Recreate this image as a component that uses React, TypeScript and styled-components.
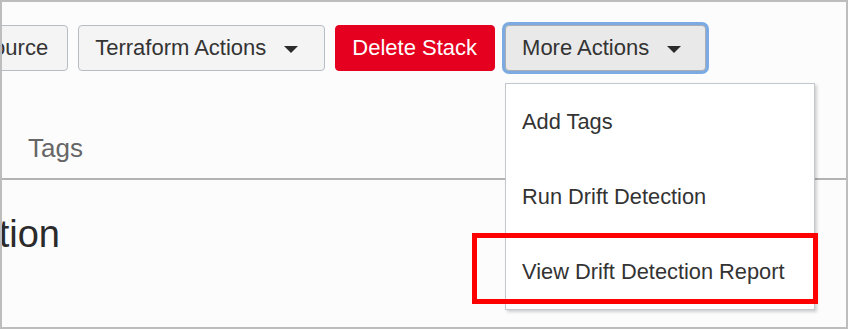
import React from "react";
import styled, { createGlobalStyle, css } from "styled-components";

const Global = createGlobalStyle`
  html, body { margin: 0; padding: 0; background: #fcfcfc; }
  * { box-sizing: border-box; }
  body { font-family: "Liberation Sans", Arial, sans-serif; }
`;

const Frame = styled.div`
  position: relative;
  width: 848px;
  height: 329px;
  border: 2px solid #bdbdbd;
  background: #fcfcfc;
  overflow: hidden;
`;

const Toolbar = styled.div`
  display: flex;
  align-items: flex-start;
  gap: 10px;
  margin-left: -65px;
  padding-top: 23px;
`;

const Button = styled.button<{ $variant?: "default" | "danger" | "active" }>`
  display: flex;
  align-items: center;
  height: 46px;
  padding: 0 19px 0 16px;
  border: 1px solid #b7bdc5;
  border-radius: 4px;
  background: #f4f4f4;
  color: #333;
  font-family: "Liberation Sans", Arial, sans-serif;
  font-size: 22px;
  white-space: nowrap;
  flex: none;
  ${(p) =>
    p.$variant === "danger" &&
    css`
      background: #e4001e;
      border-color: #e4001e;
      color: #fff;
      padding: 0 17px 0 16px;
    `}
  ${(p) =>
    p.$variant === "active" &&
    css`
      background: #e9e9e9;
      border-color: #a9aeb6;
      box-shadow: 0 0 0 3px #7caae2;
      padding: 0 17px 0 16px;
    `}
`;

const Caret = styled.span`
  width: 0;
  height: 0;
  margin-left: 18px;
  margin-right: 7px;
  margin-top: 3px;
  border-left: 7px solid transparent;
  border-right: 7px solid transparent;
  border-top: 7px solid #2b2b2b;
`;

const MenuAnchor = styled.div`
  position: relative;
  z-index: 2;
`;

const Menu = styled.div`
  position: absolute;
  top: calc(100% + 12px);
  left: 0;
  width: 310px;
  background: #fff;
  border: 1px solid #c3c8cf;
  box-shadow: 2px 2px 3px rgba(0, 0, 0, 0.18);
`;

const MenuItem = styled.div`
  position: relative;
  height: 75px;
  line-height: 75px;
  padding-left: 16px;
  font-size: 21.8px;
  color: #333;
  white-space: nowrap;
`;

const Highlight = styled.div`
  position: absolute;
  left: -34px;
  top: -1px;
  width: 346px;
  height: 71px;
  border: 5px solid #ff0000;
  pointer-events: none;
`;

const Tabs = styled.div`
  display: flex;
  margin-top: 65px;
  padding-left: 26px;
  padding-bottom: 18px;
  border-bottom: 2px solid #b3b3b3;
`;

const Tab = styled.div`
  font-size: 26px;
  line-height: 24px;
  color: #666;
`;

const HeadingClip = styled.div`
  display: flex;
  justify-content: flex-end;
  width: 58px;
  margin-top: 34.5px;
`;

const Heading = styled.h1`
  flex: none;
  margin: 0;
  font-size: 38px;
  line-height: 38px;
  font-weight: normal;
  color: #2b2b2b;
  white-space: nowrap;
`;

export default function App() {
  return (
    <>
      <Global />
      <Frame>
        <Toolbar>
          <Button>Resource</Button>
          <Button>
            Terraform Actions
            <Caret />
          </Button>
          <Button $variant="danger">Delete Stack</Button>
          <MenuAnchor>
            <Button $variant="active">
              More Actions
              <Caret />
            </Button>
            <Menu>
              <MenuItem>Add Tags</MenuItem>
              <MenuItem>Run Drift Detection</MenuItem>
              <MenuItem>
                View Drift Detection Report
                <Highlight />
              </MenuItem>
            </Menu>
          </MenuAnchor>
        </Toolbar>
        <Tabs>
          <Tab>Tags</Tab>
        </Tabs>
        <HeadingClip>
          <Heading>Stack Information</Heading>
        </HeadingClip>
      </Frame>
    </>
  );
}
